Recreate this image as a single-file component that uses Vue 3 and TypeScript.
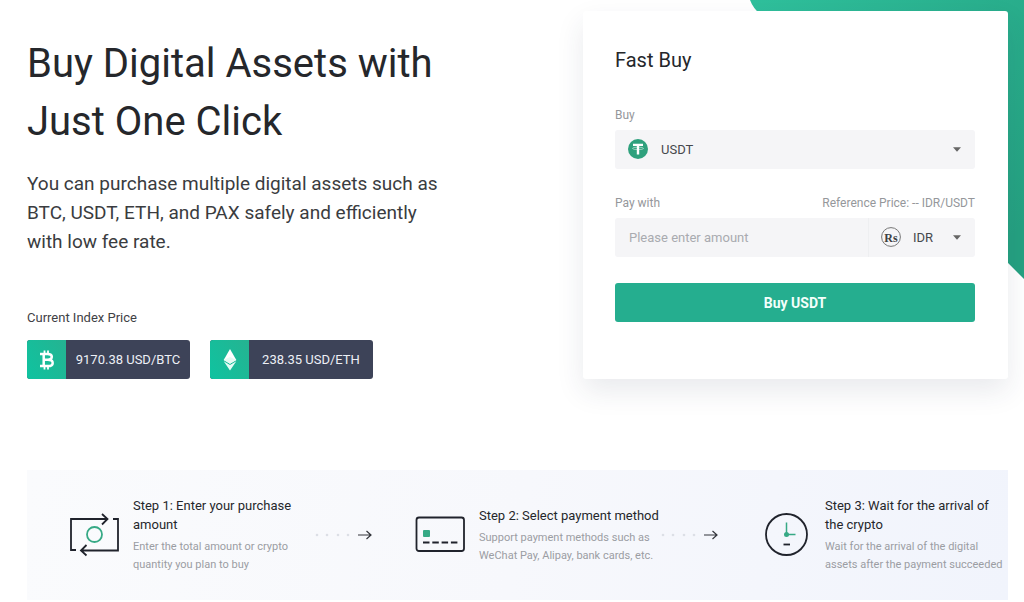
<script setup lang="ts">
import { ref } from 'vue'

interface Step {
  icon: 'exchange' | 'card' | 'clock'
  title: string
  text: string
}

const asset = ref('USDT')
const currency = ref('IDR')
const amount = ref('')

const steps: Step[] = [
  {
    icon: 'exchange',
    title: 'Step 1: Enter your purchase\namount',
    text: 'Enter the total amount or crypto\nquantity you plan to buy',
  },
  {
    icon: 'card',
    title: 'Step 2: Select payment method',
    text: 'Support payment methods such as\nWeChat Pay, Alipay, bank cards, etc.',
  },
  {
    icon: 'clock',
    title: 'Step 3: Wait for the arrival of\nthe crypto',
    text: 'Wait for the arrival of the digital\nassets after the payment succeeded',
  },
]
</script>

<template>
  <div class="page">
    <svg class="backdrop" viewBox="0 0 274 280" aria-hidden="true">
      <defs>
        <linearGradient id="backdrop-fill" x1="0" y1="0" x2="1" y2="0.8">
          <stop offset="0" stop-color="#2fc09c" />
          <stop offset="1" stop-color="#25a181" />
        </linearGradient>
      </defs>
      <path d="M0 0Q3 8 10 14L274 279V0Z" fill="url(#backdrop-fill)" />
    </svg>

    <main class="hero">
      <section class="intro">
        <h1>Buy Digital Assets with<br />Just One Click</h1>
        <p class="lead">
          You can purchase multiple digital assets such as<br />BTC, USDT, ETH, and PAX safely and
          efficiently<br />with low fee rate.
        </p>
        <h2 class="index-title">Current Index Price</h2>
        <div class="prices">
          <div class="price">
            <span class="coin">
              <svg width="16" height="20" viewBox="0 0 16 20" fill="none" stroke="#fff" aria-hidden="true">
                <path d="M5.5 0.5V4M9 0.5V4M5.5 16V19.5M9 16V19.5" stroke-width="1.8" />
                <path d="M1 3.9H8.6C14.2 3.9 14.2 9.7 8.8 9.7H5M8.8 9.7C15.4 9.7 15.2 16.1 9 16.1H1M4.7 4V16" stroke-width="2.5" />
              </svg>
            </span>
            <span class="value">9170.38 USD/BTC</span>
          </div>
          <div class="price">
            <span class="coin">
              <svg width="14" height="22" viewBox="0 0 14 22" aria-hidden="true">
                <path d="M7 0L13.3 11L7 14.8L0.7 11Z" fill="#fff" />
                <path d="M0.7 12.3L7 16L13.3 12.3L7 21.5Z" fill="#e6fbf5" />
                <path d="M7 8L13.3 11L7 14.8L0.7 11Z" fill="#e6faf3" />
              </svg>
            </span>
            <span class="value">238.35 USD/ETH</span>
          </div>
        </div>
      </section>

      <form class="card" @submit.prevent>
        <h2 class="card-title">Fast Buy</h2>

        <div class="label-row">
          <label for="asset">Buy</label>
        </div>
        <div class="field">
          <svg class="field-icon" width="20" height="20" viewBox="0 0 20 20" aria-hidden="true">
            <circle cx="10" cy="10" r="10" fill="#2fa17d" />
            <path d="M5 4.8H15V7H11.2V15.6H8.8V7H5Z" fill="#fff" />
            <ellipse cx="10" cy="9.4" rx="5.5" ry="1.2" fill="none" stroke="#fff" stroke-width="0.5" />
          </svg>
          <select id="asset" v-model="asset">
            <option>USDT</option>
          </select>
          <svg class="caret" width="8" height="5" viewBox="0 0 8 5" aria-hidden="true">
            <path d="M0 0.3H8L4 4.7Z" fill="#666" />
          </svg>
        </div>

        <div class="label-row pay-label">
          <label for="amount">Pay with</label>
          <span>Reference Price: -- IDR/USDT</span>
        </div>
        <div class="pay">
          <input id="amount" v-model="amount" type="text" placeholder="Please enter amount" />
          <div class="field currency">
            <svg class="field-icon" width="20" height="20" viewBox="0 0 20 20" aria-hidden="true">
              <circle cx="10" cy="10" r="9.4" fill="none" stroke="#777" />
              <text x="10" y="15" text-anchor="middle" class="rupee">Rs</text>
            </svg>
            <select v-model="currency" aria-label="Currency">
              <option>IDR</option>
            </select>
            <svg class="caret" width="8" height="5" viewBox="0 0 8 5" aria-hidden="true">
              <path d="M0 0.3H8L4 4.7Z" fill="#666" />
            </svg>
          </div>
        </div>

        <button type="submit" class="buy">Buy USDT</button>
      </form>
    </main>

    <ol class="steps">
      <li v-for="step in steps" :key="step.icon" class="step">
        <svg v-if="step.icon === 'exchange'" class="step-icon" viewBox="0 1 50 44" fill="none" stroke="#20232c" stroke-width="1.8" aria-hidden="true">
          <path d="M7 38H2V7H38M33 2L38.5 7L33 12.5M44 7H49V38.5H12M17.5 33L12 38.5L17.5 43.5" />
          <circle cx="25.5" cy="22.5" r="7.5" stroke="#36a985" />
        </svg>
        <svg v-else-if="step.icon === 'card'" class="step-icon" viewBox="0 1 50 44" fill="none" stroke="#20232c" stroke-width="1.8" aria-hidden="true">
          <rect x="1.5" y="5.5" width="47.5" height="33.5" rx="2.5" />
          <rect x="8" y="18" width="7" height="7" rx="1" fill="#36a985" stroke="none" />
          <path d="M8 30.5H43" stroke-dasharray="6.5 2.8" />
        </svg>
        <svg v-else class="step-icon" viewBox="0 1 50 44" fill="none" stroke="#20232c" stroke-width="1.8" aria-hidden="true">
          <circle cx="25.5" cy="22.5" r="20.5" />
          <path d="M22.5 32.5H29" />
          <path d="M25.5 10.5V22.5H34.5" stroke="#36a985" stroke-width="1.5" />
          <circle cx="25.5" cy="22.5" r="2.5" fill="#36a985" stroke="none" />
        </svg>

        <div class="step-copy">
          <h3>{{ step.title }}</h3>
          <p>{{ step.text }}</p>
        </div>

        <svg v-if="step.icon !== 'clock'" class="arrow" width="58" height="10" viewBox="0 0 58 10" fill="none" aria-hidden="true">
          <g fill="#dcdfe6">
            <circle cx="3" cy="5" r="1.3" />
            <circle cx="13" cy="5" r="1.3" />
            <circle cx="24" cy="5" r="1.3" />
            <circle cx="34" cy="5" r="1.3" />
          </g>
          <path d="M44 5H57M52.5 1L57 5L52.5 9" stroke="#33353b" stroke-width="1.2" />
        </svg>
      </li>
    </ol>
  </div>
</template>

<style>
body {
  margin: 0;
  background: #fff;
}
</style>

<style scoped>
* {
  box-sizing: border-box;
}

.page {
  position: relative;
  padding: 11px 16px 2px 27px;
  font-family: Roboto, "Liberation Sans", sans-serif;
  color: #25272b;
  overflow: hidden;
}

h1,
h2,
h3,
p,
ol {
  margin: 0;
  padding: 0;
  font-weight: 400;
}

.backdrop {
  position: absolute;
  top: 0;
  right: 0;
  width: 274px;
  height: 280px;
}

.hero {
  position: relative;
  display: grid;
  grid-template-columns: 1fr 425px;
  align-items: start;
}

.intro {
  padding-top: 24px;
}

h1 {
  font-size: 40px;
  line-height: 58px;
}

.lead {
  margin-top: 18px;
  font-size: 19px;
  line-height: 29px;
  color: #3a3c40;
}

.index-title {
  margin-top: 52px;
  font-size: 13px;
  line-height: 20px;
  color: #3f4145;
}

.prices {
  display: flex;
  gap: 20px;
  margin-top: 12px;
}

.price {
  display: flex;
  width: 163px;
  height: 39px;
  border-radius: 3px;
  overflow: hidden;
  background: #3d4358;
  color: #edf0f6;
}

.coin {
  display: flex;
  align-items: center;
  justify-content: center;
  width: 39px;
  background: linear-gradient(60deg, #0fc3a0, #25b391);
}

.value {
  flex: 1;
  font-size: 13px;
  line-height: 39px;
  text-align: center;
}

.card {
  padding: 33px 33px 57px 32px;
  border-radius: 3px;
  background: #fff;
  box-shadow: 0 12px 28px rgba(40, 50, 80, 0.1);
}

.card-title {
  font-size: 20px;
  line-height: 32px;
}

.label-row {
  display: flex;
  justify-content: space-between;
  margin-top: 31px;
  font-size: 12px;
  line-height: 16px;
  color: #95979b;
}

.pay-label {
  margin-top: 26px;
}

.field {
  position: relative;
  height: 39px;
  margin-top: 7px;
}

.field-icon {
  position: absolute;
  top: 9px;
  left: 13px;
  pointer-events: none;
}

.caret {
  position: absolute;
  top: 17px;
  right: 14px;
  pointer-events: none;
}

select,
input {
  width: 100%;
  height: 39px;
  border: 0;
  border-radius: 3px;
  outline: 0;
  background: #f5f5f7;
  font-family: inherit;
  font-size: 13px;
  color: #46484c;
}

select {
  appearance: none;
  padding: 0 28px 0 46px;
}

input {
  flex: 1;
  min-width: 0;
  padding: 0 14px;
  border-radius: 3px 0 0 3px;
}

input::placeholder {
  color: #a9abb0;
  opacity: 1;
}

.pay {
  display: flex;
  margin-top: 7px;
}

.currency {
  width: 107px;
  margin-top: 0;
}

.currency select {
  border-left: 1px solid #eeeff1;
  border-radius: 0 3px 3px 0;
  padding-left: 44px;
}

.rupee {
  font-family: "Liberation Serif", serif;
  font-size: 12px;
  font-weight: 700;
  fill: #3d3f43;
}

.buy {
  display: block;
  width: 100%;
  height: 39px;
  margin-top: 26px;
  border: 0;
  border-radius: 3px;
  background: #25ae8f;
  color: #f3fffb;
  font-family: inherit;
  font-size: 14px;
  font-weight: 700;
}

.steps {
  display: grid;
  grid-template-columns: 1fr 1fr 247px;
  align-items: center;
  min-height: 130px;
  margin-top: 91px;
  padding-left: 42px;
  background: linear-gradient(100deg, #fafbfd, #f7f8fc 50%, #f1f4fc);
  list-style: none;
}

.step {
  display: flex;
  align-items: center;
}

.step-icon {
  flex: none;
  width: 50px;
  height: 44px;
}

.step-copy {
  flex: 1;
  min-width: 0;
  margin-left: 14px;
  white-space: pre;
}

h3 {
  font-size: 13px;
  line-height: 19px;
  color: #25272b;
}

.step-copy p {
  margin-top: 4px;
  font-size: 11px;
  line-height: 18px;
  color: #9b9da3;
}

.arrow {
  flex: none;
  margin-right: 43px;
}
</style>
